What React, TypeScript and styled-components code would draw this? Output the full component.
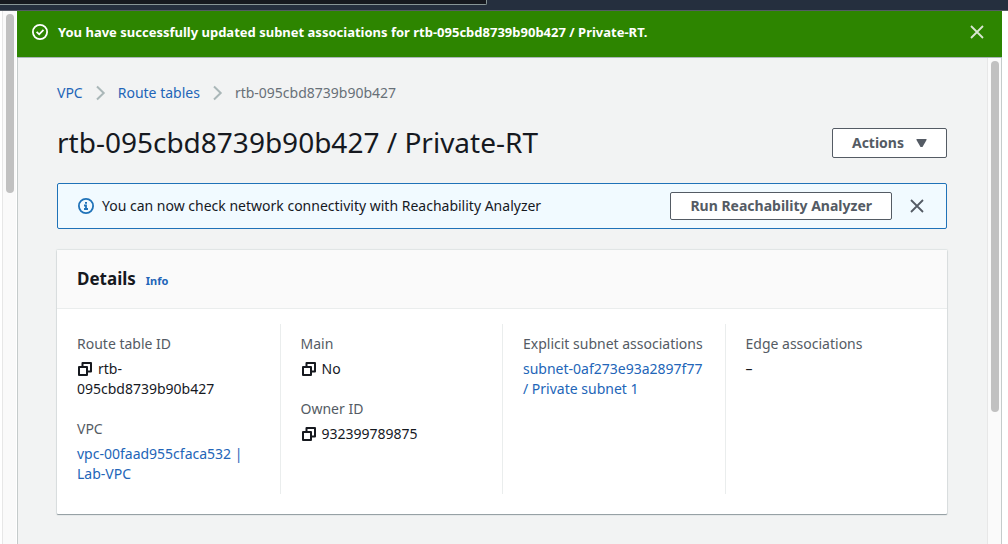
import React from "react";
import styled, { createGlobalStyle } from "styled-components";

const GlobalStyle = createGlobalStyle`
  *, *::before, *::after { box-sizing: border-box; }
  body {
    margin: 0;
    background: #f2f3f3;
    color: #16191f;
    font-family: "Noto Sans", "Open Sans", sans-serif;
    font-size: 14px;
    line-height: 20px;
  }
  h1, h2, p, dl, dt, dd, ol { margin: 0; padding: 0; }
  button { font: inherit; cursor: pointer; }
`;

const Shell = styled.div`
  height: 100vh;
  display: flex;
  flex-direction: column;
  overflow: hidden;
`;

const TopNav = styled.header`
  flex: none;
  height: 11px;
  display: flex;
  align-items: flex-start;
  background: #252f3e;
  border-bottom: 1px solid #545b64;
`;

const NavSearch = styled.div`
  width: 487px;
  height: 5px;
  background: #16191f;
  border: solid #879596;
  border-width: 0 1px 1px 0;
  border-radius: 0 0 2px 0;
`;

const Workspace = styled.div`
  flex: 1;
  min-height: 0;
  display: flex;
  background: #fff;
`;

const SidePanel = styled.aside`
  flex: none;
  width: 17px;
  display: flex;
  padding-left: 2px;
`;

const ScrollTrack = styled.div`
  flex: none;
  width: 14px;
  padding: 3px 2px 0 3px;
  background: #fafafa;
  border: solid #e7e7e7;
  border-width: 0 0 0 1px;
`;

const ScrollThumb = styled.div<{ $length: number }>`
  width: 8px;
  height: ${(p) => p.$length}px;
  border-radius: 4px;
  background: #c1c1c1;
`;

const Main = styled.main`
  flex: 1;
  min-width: 0;
  margin-right: 6px;
  display: flex;
  flex-direction: column;
`;

const IconButton = styled.button`
  display: flex;
  padding: 0;
  border: 0;
  background: none;
  color: inherit;
`;

const Flash = styled.div`
  flex: none;
  height: 47px;
  display: flex;
  align-items: center;
  gap: 10px;
  padding: 0 17px 4px 15px;
  background: #2d8500;
  border-bottom: 1px solid #aab7b8;
  color: #fff;
  font-size: 13px;
  font-weight: 700;
  ${IconButton} { color: #d9e6d2; }
`;

const Grow = styled.p`
  flex: 1;
  min-width: 0;
`;

const Scroller = styled.div`
  flex: 1;
  min-height: 0;
  display: flex;
  border: solid #c5cbcb;
  border-width: 0 1px;
`;

const Content = styled.div`
  flex: 1;
  min-width: 0;
  padding: 25px 40px 0 39px;
  background: #f2f3f3;
`;

const Crumbs = styled.ol`
  display: flex;
  align-items: center;
  gap: 9px;
  list-style: none;
  color: #687078;
  li { display: flex; align-items: center; gap: 10px; }
`;

const Link = styled.a`
  color: #2265b8;
  text-decoration: none;
`;

const TitleRow = styled.div`
  display: flex;
  align-items: center;
  justify-content: space-between;
  margin-top: 20px;
  height: 40px;
`;

const Title = styled.h1`
  padding-bottom: 2px;
  font-size: 28px;
  line-height: 36px;
  font-weight: 400;
`;

const Button = styled.button`
  height: 30px;
  display: flex;
  align-items: center;
  gap: 12px;
  padding: 0 19px;
  background: #fff;
  border: 1px solid #545b64;
  border-radius: 2px;
  color: #545b64;
  font-weight: 700;
`;

const Notice = styled.div`
  display: flex;
  align-items: center;
  margin-top: 20px;
  height: 46px;
  padding: 0 21px 0 20px;
  gap: 8px;
  background: #f1faff;
  border: 1px solid #1f72b8;
  border-radius: 2px;
`;

const NoticeActions = styled.div`
  display: flex;
  align-items: center;
  gap: 17px;
  color: #545b64;
  button { height: 28px; }
  button:last-child { align-items: center; }
`;

const Card = styled.section`
  margin-top: 21px;
  padding-bottom: 20px;
  background: #fff;
  border-radius: 1px;
  box-shadow: 0 1px 1px 0 #8f9a9e, 0 0 1px 1px #dfe4e4;
`;

const CardHeader = styled.div`
  display: flex;
  align-items: baseline;
  gap: 10px;
  padding: 17px 20px;
  background: #fafafa;
  border-bottom: 1px solid #eaeded;
`;

const CardTitle = styled.h2`
  font-size: 17px;
  line-height: 24px;
  font-weight: 700;
`;

const InfoLink = styled(Link)`
  font-size: 11px;
  font-weight: 700;
`;

const Columns = styled.div`
  display: grid;
  grid-template-columns: repeat(4, minmax(0, 1fr));
  margin-top: 15px;
`;

const Column = styled.dl`
  display: flex;
  flex-direction: column;
  gap: 20px;
  padding: 10px 20px;
  & + & { border-left: 1px solid #eaeded; }
`;

const Label = styled.dt`
  margin-bottom: 5px;
  color: #545b64;
`;

const NoBreak = styled.span`
  white-space: nowrap;
`;

const CopyButton = styled.button`
  padding: 0;
  margin-right: 5px;
  border: 0;
  background: none;
  color: inherit;
  svg { display: block; }
  vertical-align: -3px;
`;

const CloseIcon = () => (
  <svg width="16" height="16" viewBox="0 0 16 16" fill="none" stroke="currentColor" strokeWidth="1.8">
    <path d="M2 2l12 12M14 2L2 14" />
  </svg>
);

const CheckIcon = () => (
  <svg width="16" height="16" viewBox="0 0 16 16" fill="none" stroke="currentColor" strokeWidth="1.8">
    <circle cx="8" cy="8" r="7.1" />
    <path d="M4.600 7.800l2.600 2.500L11.500 5.900" />
  </svg>
);

const InfoIcon = () => (
  <svg width="16" height="16" viewBox="0 0 16 16" fill="none" stroke="#1f72b8" strokeWidth="1.8">
    <circle cx="8" cy="8" r="7.1" />
    <path d="M7 4.800h2M6 7.500h2V11M6 11h4" />
  </svg>
);

const Chevron = () => (
  <svg width="16" height="16" viewBox="0 0 16 16" fill="none" stroke="#aab7b8" strokeWidth="2">
    <path d="M4 1.5L10.700 8 4 14.500" />
  </svg>
);

const Caret = () => (
  <svg width="11" height="8" viewBox="0 0 11 8" fill="currentColor">
    <path d="M0.500 0h10v1L6.500 8h-2L0.500 1z" />
  </svg>
);

const CopyIcon = () => (
  <svg width="16" height="16" viewBox="0 0 16 16" fill="none" stroke="currentColor" strokeWidth="2" strokeLinejoin="round">
    <path d="M2 6h8v8H2z" />
    <path d="M5.500 6V2H14v8.500h-4" />
  </svg>
);

const Copy = ({ what }: { what: string }) => (
  <CopyButton type="button" aria-label={`Copy ${what}`}>
    <CopyIcon />
  </CopyButton>
);

export default function App() {
  return (
    <>
      <GlobalStyle />
      <Shell>
        <TopNav>
          <NavSearch />
        </TopNav>
        <Workspace>
          <SidePanel>
            <ScrollTrack>
              <ScrollThumb $length={179} />
            </ScrollTrack>
          </SidePanel>
          <Main>
            <Flash role="status">
              <CheckIcon />
              <Grow>
                You have successfully updated subnet associations for rtb-095cbd8739b90b427 / Private-RT.
              </Grow>
              <IconButton type="button" aria-label="Dismiss message">
                <CloseIcon />
              </IconButton>
            </Flash>
            <Scroller>
              <Content>
                <nav aria-label="Breadcrumbs">
                  <Crumbs>
                    <li>
                      <Link href="#vpc">VPC</Link>
                      <Chevron />
                    </li>
                    <li>
                      <Link href="#route-tables">Route tables</Link>
                      <Chevron />
                    </li>
                    <li>rtb-095cbd8739b90b427</li>
                  </Crumbs>
                </nav>
                <TitleRow>
                  <Title>rtb-095cbd8739b90b427 / Private-RT</Title>
                  <Button type="button">
                    Actions
                    <Caret />
                  </Button>
                </TitleRow>
                <Notice>
                  <InfoIcon />
                  <Grow>You can now check network connectivity with Reachability Analyzer</Grow>
                  <NoticeActions>
                    <Button type="button">Run Reachability Analyzer</Button>
                    <IconButton type="button" aria-label="Dismiss notice">
                      <CloseIcon />
                    </IconButton>
                  </NoticeActions>
                </Notice>
                <Card>
                  <CardHeader>
                    <CardTitle>Details</CardTitle>
                    <InfoLink href="#info">Info</InfoLink>
                  </CardHeader>
                  <Columns>
                    <Column>
                      <div>
                        <Label>Route table ID</Label>
                        <dd>
                          <Copy what="route table ID" />
                          rtb-
                          <br />
                          095cbd8739b90b427
                        </dd>
                      </div>
                      <div>
                        <Label>VPC</Label>
                        <dd>
                          <Link href="#lab-vpc">
                            <NoBreak>vpc-00faad955cfaca532 |</NoBreak> <NoBreak>Lab-VPC</NoBreak>
                          </Link>
                        </dd>
                      </div>
                    </Column>
                    <Column>
                      <div>
                        <Label>Main</Label>
                        <dd>
                          <Copy what="main" />
                          No
                        </dd>
                      </div>
                      <div>
                        <Label>Owner ID</Label>
                        <dd>
                          <Copy what="owner ID" />
                          932399789875
                        </dd>
                      </div>
                    </Column>
                    <Column>
                      <div>
                        <Label>Explicit subnet associations</Label>
                        <dd>
                          <Link href="#subnet">
                            <NoBreak>subnet-0af273e93a2897f77</NoBreak> / Private subnet 1
                          </Link>
                        </dd>
                      </div>
                    </Column>
                    <Column>
                      <div>
                        <Label>Edge associations</Label>
                        <dd>–</dd>
                      </div>
                    </Column>
                  </Columns>
                </Card>
              </Content>
              <ScrollTrack>
                <ScrollThumb $length={351} />
              </ScrollTrack>
            </Scroller>
          </Main>
        </Workspace>
      </Shell>
    </>
  );
}
